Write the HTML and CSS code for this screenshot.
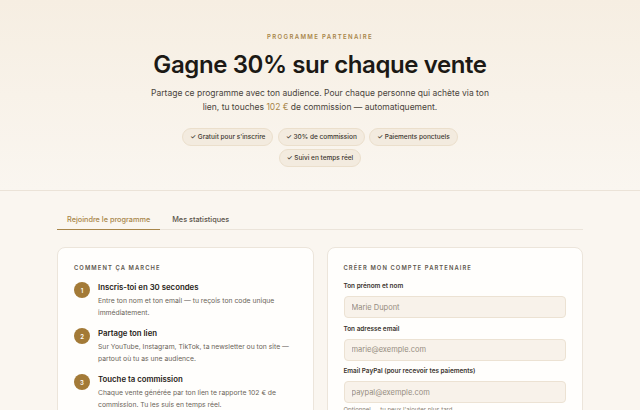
FILE: index.html
```html
<!DOCTYPE html>
<html lang="fr">
<head>
<meta charset="utf-8">
<link rel="stylesheet" href="styles.css">
</head>
<body>
<header class="hero">
  <div class="eyebrow">PROGRAMME PARTENAIRE</div>
  <h1 class="title">Gagne 30% sur chaque vente</h1>
  <p class="lead">Partage ce programme avec ton audience. Pour chaque personne qui achète via ton lien, tu touches <span class="gold">102 €</span> de commission — automatiquement.</p>
  <div class="chips">
    <span class="chip">✓ Gratuit pour s'inscrire</span>
    <span class="chip">✓ 30% de commission</span>
    <span class="chip">✓ Paiements ponctuels</span>
    <span class="chip">✓ Suivi en temps réel</span>
  </div>
</header>
<main class="main">
  <nav class="tabs">
    <span class="tab active">Rejoindre le programme</span>
    <span class="tab">Mes statistiques</span>
  </nav>
  <div class="grid">
    <section class="card">
      <div class="card-title">COMMENT ÇA MARCHE</div>
      <div class="step">
        <div class="num">1</div>
        <div class="step-body">
          <div class="step-title">Inscris-toi en 30 secondes</div>
          <div class="step-desc">Entre ton nom et ton email — tu reçois ton code unique immédiatement.</div>
        </div>
      </div>
      <div class="step">
        <div class="num">2</div>
        <div class="step-body">
          <div class="step-title">Partage ton lien</div>
          <div class="step-desc">Sur YouTube, Instagram, TikTok, ta newsletter ou ton site — partout où tu as une audience.</div>
        </div>
      </div>
      <div class="step">
        <div class="num">3</div>
        <div class="step-body">
          <div class="step-title">Touche ta commission</div>
          <div class="step-desc">Chaque vente générée par ton lien te rapporte 102 € de commission. Tu les suis en temps réel.</div>
        </div>
      </div>
    </section>
    <section class="card">
      <div class="card-title">CRÉER MON COMPTE PARTENAIRE</div>
      <label class="field">
        <span class="label">Ton prénom et nom</span>
        <input class="input" type="text" placeholder="Marie Dupont">
      </label>
      <label class="field">
        <span class="label">Ton adresse email</span>
        <input class="input" type="text" placeholder="marie@exemple.com">
      </label>
      <label class="field">
        <span class="label">Email PayPal (pour recevoir tes paiements)</span>
        <input class="input" type="text" placeholder="paypal@exemple.com">
        <span class="hint">Optionnel — tu peux l'ajouter plus tard</span>
      </label>
    </section>
  </div>
</main>
</body>
</html>
```
FILE: styles.css
```css
* { box-sizing: border-box; }
html, body { margin: 0; padding: 0; }
body {
  font-family: Inter, "Noto Sans", sans-serif;
  background: #faf6f0;
  color: #1f1b16;
  width: 640px;
  height: 410px;
  overflow: hidden;
}
.hero {
  background: linear-gradient(180deg, #f6eee2 0%, #faf6f0 100%);
  border-bottom: 1px solid #ebe3d8;
  height: 191px;
  padding-top: 33px;
  text-align: center;
}
.eyebrow {
  font-size: 6px;
  font-weight: 600;
  letter-spacing: 1.35px;
  color: #a8864a;
  line-height: 8px;
}
.title {
  margin: 9px 0 0;
  font-size: 24px;
  font-weight: 600;
  letter-spacing: -0.4px;
  line-height: 30px;
  color: #1c1915;
}
.lead {
  margin: 6px auto 0;
  width: 345px;
  font-size: 8.5px;
  line-height: 14px;
  color: #4a443c;
}
.gold { color: #a8864a; }
.chips {
  margin: 14px auto 0;
  width: 280px;
  display: flex;
  flex-wrap: wrap;
  justify-content: center;
  gap: 3px 4.5px;
}
.chip {
  display: inline-block;
  height: 18px;
  line-height: 16px;
  padding: 0 7px;
  border: 1px solid #ebdfcc;
  background: #f3ebdf;
  border-radius: 9px;
  font-size: 6.5px;
  font-weight: 500;
  color: #3d3730;
}
.main {
  width: 526px;
  margin: 0 auto;
  padding-top: 21px;
}
.tabs {
  display: flex;
  border-bottom: 1px solid #ebe4da;
  height: 18px;
}
.tab {
  font-size: 7.3px;
  font-weight: 500;
  color: #5b544b;
  padding: 3px 10px 0;
  line-height: 10px;
  margin-right: 2px;
}
.tab.active {
  color: #a8864a;
  border-bottom: 1.5px solid #a8864a;
  margin-bottom: -1px;
}
.grid {
  display: grid;
  grid-template-columns: 1fr 1fr;
  gap: 13px;
  margin-top: 17px;
}
.card {
  background: #fffefc;
  border: 1px solid #ece5db;
  border-radius: 8px;
  padding: 16px 16px 0;
  height: 200px;
}
.card-title {
  font-size: 5.8px;
  font-weight: 600;
  letter-spacing: 1.1px;
  color: #5c554c;
  line-height: 8px;
}
.step {
  display: flex;
  gap: 8px;
  margin-top: 8px;
}
.card-title + .step { margin-top: 9px; }
.num {
  flex: 0 0 16px;
  width: 16px;
  height: 16px;
  border-radius: 50%;
  background: #a37a37;
  color: #fff;
  font-size: 6px;
  font-weight: 600;
  display: flex;
  align-items: center;
  justify-content: center;
  margin-top: 1px;
}
.step-title {
  font-size: 7.8px;
  font-weight: 600;
  color: #1f1b16;
  line-height: 12px;
}
.step-desc {
  margin-top: 2px;
  font-size: 6.8px;
  line-height: 12px;
  color: #6b6459;
}
.field {
  display: flex;
  flex-direction: column;
  margin-top: 6.5px;
}
.card-title + .field { margin-top: 10px; }
.label {
  font-size: 6.4px;
  font-weight: 600;
  color: #3b352e;
  line-height: 9px;
  margin-bottom: 5px;
}
.input {
  height: 22px;
  border: 1px solid #ece2d3;
  background: #f8f2ea;
  border-radius: 4px;
  padding: 0 7px;
  font-family: Inter, "Noto Sans", sans-serif;
  font-size: 7.5px;
  color: #3b352e;
}
.input::placeholder { color: #958c80; }
.hint {
  font-size: 6px;
  color: #8a8276;
  margin-top: 3px;
  line-height: 8px;
}
```
